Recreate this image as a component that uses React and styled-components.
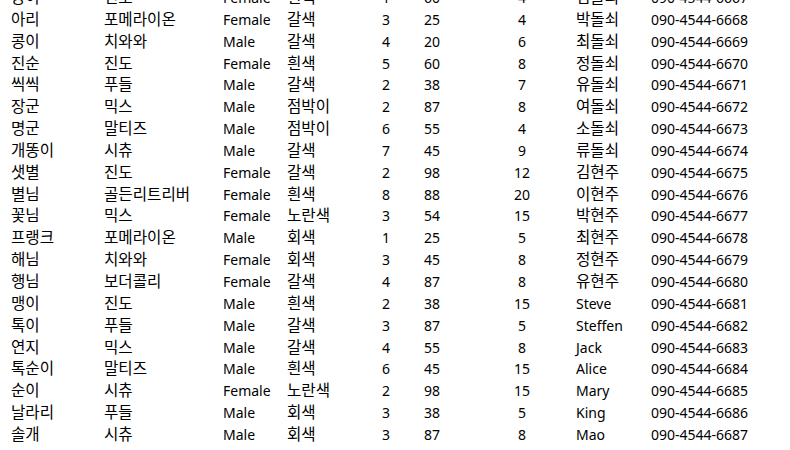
import React from "react";
import styled, { createGlobalStyle } from "styled-components";

const Global = createGlobalStyle`
  html, body { margin: 0; padding: 0; background: #fff; }
  body { overflow: hidden; }
`;

const Viewport = styled.div`
  width: 790px;
  height: 450px;
  overflow: hidden;
`;

const Table = styled.table`
  margin-top: -13px;
  margin-left: 11px;
  border-collapse: collapse;
  table-layout: fixed;
  font-family: "Noto Sans", "Noto Sans CJK KR", sans-serif;
  font-size: 14px;
  color: #000;
`;

const Col = styled.col`
  width: ${(p) => p.$w}px;
`;

const Cell = styled.td`
  height: 21.85px;
  padding: 0 0 0 ${(p) => p.$pad || 0}px;
  line-height: 21.85px;
  white-space: nowrap;
  text-align: ${(p) => p.$align || "left"};
  vertical-align: middle;
  font-size: ${(p) => (p.$ko ? "15.6px" : "14px")};
`;

const rows = [
  ["몽이", "진도", "Female", "흰색", 1, 60, 4, "김돌쇠", "090-4544-6667"],
  ["아리", "포메라이온", "Female", "갈색", 3, 25, 4, "박돌쇠", "090-4544-6668"],
  ["콩이", "치와와", "Male", "갈색", 4, 20, 6, "최돌쇠", "090-4544-6669"],
  ["진순", "진도", "Female", "흰색", 5, 60, 8, "정돌쇠", "090-4544-6670"],
  ["씩씩", "푸들", "Male", "갈색", 2, 38, 7, "유돌쇠", "090-4544-6671"],
  ["장군", "믹스", "Male", "점박이", 2, 87, 8, "여돌쇠", "090-4544-6672"],
  ["명군", "말티즈", "Male", "점박이", 6, 55, 4, "소돌쇠", "090-4544-6673"],
  ["개똥이", "시츄", "Male", "갈색", 7, 45, 9, "류돌쇠", "090-4544-6674"],
  ["샛별", "진도", "Female", "갈색", 2, 98, 12, "김현주", "090-4544-6675"],
  ["별님", "골든리트리버", "Female", "흰색", 8, 88, 20, "이현주", "090-4544-6676"],
  ["꽃님", "믹스", "Female", "노란색", 3, 54, 15, "박현주", "090-4544-6677"],
  ["프랭크", "포메라이온", "Male", "회색", 1, 25, 5, "최현주", "090-4544-6678"],
  ["해님", "치와와", "Female", "회색", 3, 45, 8, "정현주", "090-4544-6679"],
  ["행님", "보더콜리", "Female", "갈색", 4, 87, 8, "유현주", "090-4544-6680"],
  ["맹이", "진도", "Male", "흰색", 2, 38, 15, "Steve", "090-4544-6681"],
  ["톡이", "푸들", "Male", "갈색", 3, 87, 5, "Steffen", "090-4544-6682"],
  ["연지", "믹스", "Male", "갈색", 4, 55, 8, "Jack", "090-4544-6683"],
  ["톡순이", "말티즈", "Male", "흰색", 6, 45, 15, "Alice", "090-4544-6684"],
  ["순이", "시츄", "Female", "노란색", 2, 98, 15, "Mary", "090-4544-6685"],
  ["날라리", "푸들", "Male", "회색", 3, 38, 5, "King", "090-4544-6686"],
  ["솔개", "시츄", "Male", "회색", 3, 87, 8, "Mao", "090-4544-6687"],
];

const widths = [93, 119, 64, 95, 42, 56, 84, 87, 120];
const isKo = (v) => /[\uac00-\ud7a3]/.test(String(v));

export default function App() {
  return (
    <Viewport>
      <Global />
      <Table>
        <colgroup>
          {widths.map((w, i) => (
            <Col key={i} $w={w} />
          ))}
        </colgroup>
        <tbody>
          {rows.map((r, i) => (
            <tr key={i}>
              <Cell $ko={isKo(r[0])}>{r[0]}</Cell>
              <Cell $ko={isKo(r[1])}>{r[1]}</Cell>
              <Cell>{r[2]}</Cell>
              <Cell $ko={isKo(r[3])}>{r[3]}</Cell>
              <Cell>{r[4]}</Cell>
              <Cell>{r[5]}</Cell>
              <Cell $align="center">{r[6]}</Cell>
              <Cell $pad={12} $ko={isKo(r[7])}>{r[7]}</Cell>
              <Cell>{r[8]}</Cell>
            </tr>
          ))}
        </tbody>
      </Table>
    </Viewport>
  );
}
